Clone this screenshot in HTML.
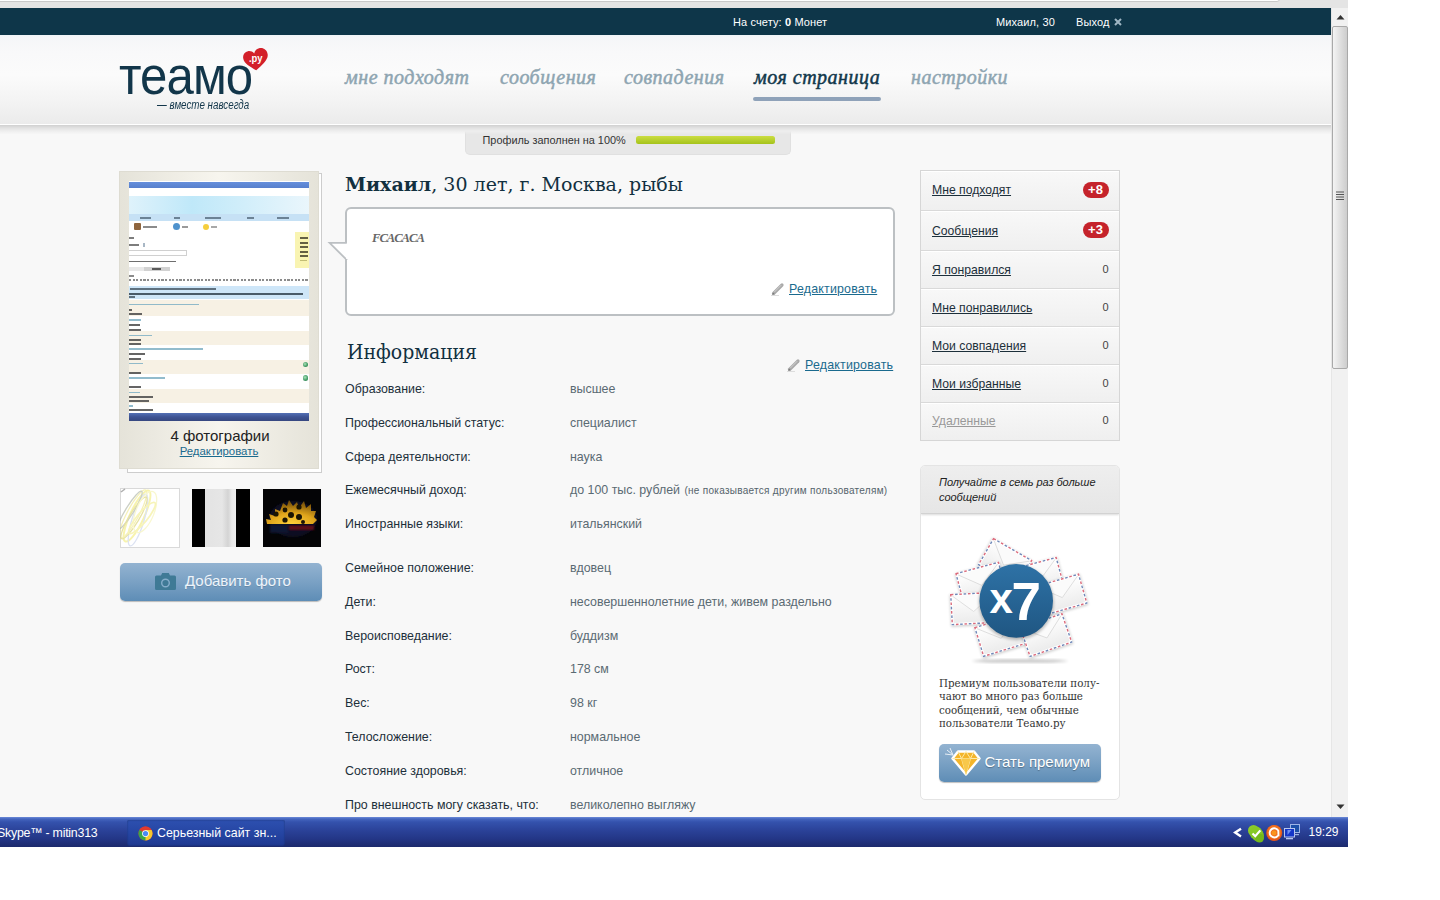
<!DOCTYPE html>
<html lang="ru">
<head>
<meta charset="utf-8">
<title>Теамо</title>
<style>
*{box-sizing:border-box;margin:0;padding:0}
html,body{width:1440px;height:900px;background:#fff;overflow:hidden}
body{font-family:"Liberation Sans","DejaVu Sans",sans-serif;font-size:12px;color:#1c2f3a;position:relative}
.abs{position:absolute}
#shot{position:absolute;left:0;top:0;width:1348px;height:847px;overflow:hidden;background:#f8f8f8}
#chrome{position:absolute;left:0;top:0;width:1348px;height:8px;background:#e4e4e4}
#chrome i{position:absolute;left:-4px;top:-6px;width:1284px;height:8px;background:#fff;border:1px solid #c9c9c9;border-radius:3px}
#page{position:absolute;left:0;top:8px;width:1331px;height:809px;background:#f8f8f8;overflow:hidden}
#topbar{position:absolute;left:0;top:0;width:1331px;height:27px;background:#0e3649;color:#fff;font-size:11px}
#topbar span{position:absolute;top:8px;letter-spacing:.12px;white-space:nowrap;line-height:13px}
#head{position:absolute;left:0;top:27px;width:1331px;height:88.5px;background:linear-gradient(#eef4f7 0,#f5f6f8 2px,#f9f9fa 20%,#fbfbfb 45%,#f4f4f4 72%,#ebebeb 100%);z-index:2}
#head:after{content:"";position:absolute;left:0;top:88.5px;width:1331px;height:10.5px;background:linear-gradient(#fff 0,#fff 1.5px,#d3d3d3 1.5px,#e2e2e2 4px,#eeeeee 7px,rgba(248,248,248,0) 10.5px);pointer-events:none}
.nav{position:absolute;top:31px;font-family:"Liberation Serif","DejaVu Serif",serif;font-style:italic;font-size:20px;line-height:22px;color:#8ea5b1;white-space:nowrap;letter-spacing:.5px;-webkit-text-stroke:.5px currentColor}
.nav.on{color:#12384b}
#navbar{position:absolute;left:753px;top:62px;width:128px;height:4px;border-radius:2px;background:#8fa2b9}
#prog{position:absolute;left:465px;top:118px;width:326px;height:28.5px;background:linear-gradient(#dedede 0,#e7e7e7 6px,#e7e7e7 100%);border:1px solid #e0e0e0;border-top:none;border-radius:0 0 5px 5px;font-size:10.9px;color:#333}
#prog span{position:absolute;left:16.5px;top:8px;white-space:nowrap}
#prog i{position:absolute;left:170px;top:9.5px;width:139px;height:8px;border-radius:2.5px;background:linear-gradient(#cbdd42,#a5c31b)}

#photo{position:absolute;left:119px;top:163px;width:200px;height:297.5px;background:linear-gradient(90deg,#e5e3d9 0%,#f7f5ee 50%,#e5e3d9 100%);border:1px solid #dedcd2}
#sheet{position:absolute;left:127px;top:165px;width:194.5px;height:299.5px;background:#fff;border:1px solid #cdcdcd}
#pimg{position:absolute;left:9px;top:9px;width:180px;height:240px;background:#fff;overflow:hidden}
#pimg i{position:absolute;display:block;opacity:.85}
#pcap{position:absolute;left:0;top:255px;width:200px;text-align:center;font-size:15px;line-height:17px;color:#222}
#pedit{position:absolute;left:0;top:273px;width:198px;text-align:center;font-size:11.4px;line-height:13px;color:#1a6a8e;text-decoration:underline}
.th{position:absolute;top:481px;width:59px;height:59px}
#addbtn{position:absolute;left:120px;top:555px;width:202px;height:38px;border-radius:5px;background:linear-gradient(#93b3d1 0%,#7aa1c4 50%,#5e8db6 100%);box-shadow:0 1px 1px rgba(0,0,0,.25);color:#eef4fa;font-size:15px}
#addbtn span{position:absolute;left:65px;top:9px;line-height:18px;white-space:nowrap;text-shadow:0 1px 0 rgba(0,0,0,.12)}

.serif{font-family:"Liberation Serif","DejaVu Serif",serif}
#ttl{position:absolute;left:345px;top:162px;font-family:"DejaVu Serif","Liberation Serif",serif;font-size:19px;line-height:28px;color:#12303f;white-space:nowrap}
#bub{position:absolute;left:345px;top:199px;width:550px;height:109px;background:#fff;border:2px solid #bcc0c3;border-radius:6px}
#bubarrow{position:absolute;left:326px;top:228px;width:22px;height:26px}
#quote{position:absolute;left:372px;top:223px;letter-spacing:-1px;font-size:12.6px;line-height:14px;font-weight:bold;font-style:italic;color:#666;white-space:nowrap}
.edit{position:absolute;letter-spacing:.2px;font-size:12.4px;line-height:14px;color:#1a6a8e;text-decoration:underline;white-space:nowrap}
.pen{position:absolute;width:14px;height:14px}
#info{position:absolute;left:347px;top:329.5px;font-family:"DejaVu Serif Condensed","DejaVu Serif",serif;font-stretch:condensed;font-size:21px;line-height:28px;color:#12303f;white-space:nowrap}
.lb{position:absolute;left:345px;font-size:12.4px;line-height:14px;color:#1c2f3a;white-space:nowrap}
.vl{position:absolute;left:570px;font-size:12.4px;line-height:14px;color:#5a6a73;white-space:nowrap}
.vl small{font-size:10px;color:#55636b;letter-spacing:.28px;margin-left:1px}

#menu{position:absolute;left:920px;top:162px;width:200px;height:271px;border:1px solid #d6d6d6;background:#f6f6f6}
.mi{position:absolute;left:0;width:198px;background:linear-gradient(#f8f8f8,#efefef);border-top:1px solid #fff}
.mi+.mi{box-shadow:0 -1px 0 #d9d9d9}
.mi a{position:absolute;left:11px;font-size:12.2px;line-height:14px;color:#1c2f3a;text-decoration:underline;white-space:nowrap}
.mi em{position:absolute;right:10.5px;font-style:normal;font-size:11px;line-height:13px;color:#444}
.mi b{position:absolute;right:10.5px;width:26px;height:16px;border-radius:8px;background:#c5232b;color:#fff;font-size:13px;line-height:16px;margin-top:-1px;text-align:center;letter-spacing:.2px}
#promo{position:absolute;left:920px;top:457px;width:199.5px;height:335px;background:#fff;border:1px solid #e4e4e4;border-radius:5px;overflow:hidden}
#promoh{position:absolute;left:0;top:0;width:198px;height:48px;background:linear-gradient(#eeeeee,#e6e6e6);border-bottom:1px solid #d2d2d2;box-shadow:0 1px 2px rgba(0,0,0,.15)}
#promoh span{position:absolute;left:18px;top:9px;width:175px;font-size:11px;letter-spacing:-.05px;line-height:15px;font-style:italic;color:#222;font-family:"Liberation Sans",sans-serif}
#promot{position:absolute;left:18px;top:210.5px;width:178px;font-family:"DejaVu Serif","Liberation Serif",serif;font-size:10.3px;line-height:13.5px;color:#333;white-space:nowrap}
#prem{position:absolute;left:18px;top:278px;width:162px;height:38px;border-radius:5px;background:linear-gradient(#93b3d1 0%,#7aa1c4 50%,#5e8db6 100%);box-shadow:0 1px 1px rgba(0,0,0,.25);color:#fff;font-size:15px}
#prem span{position:absolute;left:45.5px;top:9px;line-height:18px;white-space:nowrap;text-shadow:0 1px 1px rgba(0,0,0,.3)}

#logo{position:absolute;left:119px;top:10px;font-size:54px;line-height:60px;color:#12364a;white-space:nowrap;transform-origin:0 0;transform:scaleX(.91);letter-spacing:-1px}
#heart{position:absolute;left:241px;top:10.7px;width:30px;height:26px}
#tag{position:absolute;left:157px;top:62.5px;font-size:12px;line-height:14px;font-style:italic;color:#12364a;white-space:nowrap;transform-origin:0 0;transform:scaleX(.815)}
#sb{position:absolute;left:1331px;top:8px;width:17px;height:809px;background:#f1f1f1;border-left:1px solid #e6e6e6}
#sbt{position:absolute;left:0;top:18px;width:16px;height:343px;border:1px solid #a9a9a9;border-radius:2px;background:linear-gradient(90deg,#f4f4f4 0%,#e2e2e2 45%,#cdcdcd 100%)}
#task{position:absolute;left:0;top:817px;width:1348px;height:30px;background:linear-gradient(#6c8ad8 0,#4565be 2px,#3452ad 5px,#2a4197 14px,#233686 22px,#1c2a6c 30px);color:#fff;font-size:12.4px}
#task span{position:absolute;white-space:nowrap;line-height:15px}
#tbtn{position:absolute;left:127px;top:3px;width:158px;height:26px;background:linear-gradient(#2d50b0,#2443a0 60%,#1f3990);border-radius:2px;box-shadow:inset 0 0 2px rgba(0,0,0,.35)}
</style>
</head>
<body>
<div id="shot">
 <div id="page">
  <div id="topbar">
   <span style="left:733px">На счету: <b>0</b> Монет</span>
   <span style="left:996px">Михаил, 30</span>
   <span style="left:1076px">Выход <svg width="8" height="8" viewBox="0 0 8 8" style="margin-left:1px"><path d="M1 1L7 7M7 1L1 7" stroke="#9fb6c4" stroke-width="2"/></svg></span>
  </div>
  <div id="head">
   <div class="nav" style="left:345px">мне подходят</div>
   <div class="nav" style="left:500px">сообщения</div>
   <div class="nav" style="left:624px">совпадения</div>
   <div class="nav on" style="left:754px">моя страница</div>
   <div class="nav" style="left:911px">настройки</div>
   <div id="navbar"></div>
   <div id="logo">теамо</div>
   <svg id="heart" viewBox="0 0 30 26"><g transform="translate(.3 .2) rotate(-9 15 13)"><path d="M13.2 24 C8 19.5 2.2 15.5 2.2 10 C2.2 6.2 4.8 3.8 8 3.8 C10.5 3.8 12.6 5 13.8 7 C14.8 4.4 17.2 2.6 20.2 2.6 C24 2.6 27 5.6 27 9.8 C27 15.5 19.5 19.5 13.2 24Z" fill="#d3202a"/></g><text x="7.9" y="15.9" font-family="Liberation Sans, sans-serif" font-size="10.5" font-weight="bold" fill="#fff" textLength="13.5" lengthAdjust="spacingAndGlyphs">.ру</text></svg>
   <div id="tag">— вместе навсегда</div>

  </div>
  <div id="prog"><span>Профиль заполнен на 100%</span><i></i></div>
  
  <div id="sheet"></div>
  <div id="photo">
   <div id="pimg">
    <i style="left:0px;top:0.5px;width:180px;height:6.3px;background:linear-gradient(#4a7bd6,#3a69c4)"></i>
    <i style="left:0px;top:15px;width:180px;height:18px;background:linear-gradient(90deg,#d9f0fa 0%,#b4e4f8 35%,#c6eaf9 60%,#e6f4fb 100%)"></i>
    <i style="left:0px;top:33px;width:180px;height:7px;background:#bcdcf3"></i>
    <i style="left:11px;top:35.5px;width:11px;height:2px;background:#5b7184"></i>
    <i style="left:45px;top:35.5px;width:6px;height:2px;background:#5b7184"></i>
    <i style="left:76px;top:35.5px;width:16px;height:2px;background:#5b7184"></i>
    <i style="left:118px;top:35.5px;width:7px;height:2px;background:#5b7184"></i>
    <i style="left:148px;top:35.5px;width:12px;height:2px;background:#5b7184"></i>
    <i style="left:5px;top:42px;width:7px;height:7px;background:#7a4a1c;border-radius:1px"></i>
    <i style="left:14px;top:45px;width:14px;height:1.5px;background:#777"></i>
    <i style="left:43.5px;top:42px;width:7px;height:7px;background:#2f7fc4;border-radius:50%"></i>
    <i style="left:53px;top:45px;width:6px;height:1.5px;background:#888"></i>
    <i style="left:74px;top:42.5px;width:6px;height:6px;background:#f3c61c;border-radius:50%"></i>
    <i style="left:82px;top:45px;width:6px;height:1.5px;background:#999"></i>
    <i style="left:166px;top:51px;width:14px;height:36px;background:#f8f2a4"></i>
    <i style="left:171px;top:55.5px;width:8px;height:2px;background:#4a4530"></i>
    <i style="left:171px;top:60.5px;width:8px;height:2px;background:#4a4530"></i>
    <i style="left:171px;top:65px;width:8px;height:2px;background:#4a4530"></i>
    <i style="left:171px;top:69.5px;width:8px;height:2px;background:#4a4530"></i>
    <i style="left:171px;top:74px;width:8px;height:2px;background:#4a4530"></i>
    <i style="left:171px;top:78.5px;width:7px;height:1.5px;background:#b9b36a"></i>
    <i style="left:0px;top:56px;width:5px;height:1.5px;background:#666"></i>
    <i style="left:0px;top:63px;width:10px;height:1.5px;background:#666"></i>
    <i style="left:14px;top:61.5px;width:2px;height:4px;background:#9ab"></i>
    <i style="left:-1px;top:69px;width:59px;height:6px;border:1px solid #c8c8c8;background:#fff"></i>
    <i style="left:0px;top:79.5px;width:47px;height:1.8px;background:#555"></i>
    <i style="left:0px;top:86px;width:15px;height:4px;background:#e4e4e4"></i>
    <i style="left:15px;top:86px;width:26px;height:4px;background:#c9c9c9"></i>
    <i style="left:23px;top:87px;width:9px;height:2px;background:#444"></i>
    <i style="left:0px;top:94px;width:5px;height:1.5px;background:#777"></i>
    <i style="left:0px;top:97.5px;width:180px;height:2.2px;background:repeating-linear-gradient(90deg,#777 0 2.2px,#fff 2.2px 3.6px)"></i>
    <i style="left:0px;top:104.5px;width:180px;height:13.5px;background:#c6e2f7"></i>
    <i style="left:1px;top:106.8px;width:86px;height:1.8px;background:#4a5a68"></i>
    <i style="left:0px;top:112px;width:174px;height:1.8px;background:#33424f"></i>
    <i style="left:0px;top:115.3px;width:6px;height:1.5px;background:#4a5a68"></i>
    <i style="left:0px;top:119px;width:180px;height:15.7px;background:#f6efdf"></i>
    <i style="left:0px;top:150.2px;width:180px;height:14px;background:#f6efdf"></i>
    <i style="left:0px;top:179px;width:180px;height:14px;background:#f6efdf"></i>
    <i style="left:0px;top:207.8px;width:180px;height:14px;background:#f6efdf"></i>
    <i style="left:0px;top:122.5px;width:70px;height:1.6px;background:#7fb0c4"></i>
    <i style="left:0px;top:127.8px;width:3px;height:2px;background:#4a4a4a"></i>
    <i style="left:0px;top:132.3px;width:13px;height:2px;background:#4a4a4a"></i>
    <i style="left:0px;top:138.2px;width:12px;height:1.6px;background:#7fb0c4"></i>
    <i style="left:0px;top:143.3px;width:10.5px;height:2px;background:#4a4a4a"></i>
    <i style="left:0px;top:147.8px;width:11.5px;height:2px;background:#4a4a4a"></i>
    <i style="left:0px;top:153.7px;width:23px;height:1.6px;background:#7fb0c4"></i>
    <i style="left:0px;top:157.5px;width:11.5px;height:2px;background:#4a4a4a"></i>
    <i style="left:0px;top:161.5px;width:11.5px;height:2px;background:#4a4a4a"></i>
    <i style="left:0px;top:167.3px;width:74px;height:1.6px;background:#7fb0c4"></i>
    <i style="left:0px;top:172.3px;width:16px;height:2px;background:#4a4a4a"></i>
    <i style="left:0px;top:176.8px;width:11.5px;height:2px;background:#4a4a4a"></i>
    <i style="left:0px;top:181.8px;width:14px;height:1.6px;background:#7fb0c4"></i>
    <i style="left:0px;top:190.5px;width:11.5px;height:2px;background:#4a4a4a"></i>
    <i style="left:0px;top:196px;width:36px;height:1.6px;background:#7fb0c4"></i>
    <i style="left:0px;top:205.3px;width:11.5px;height:2px;background:#4a4a4a"></i>
    <i style="left:0px;top:210.5px;width:11px;height:1.6px;background:#7fb0c4"></i>
    <i style="left:0px;top:214.6px;width:24px;height:2px;background:#4a4a4a"></i>
    <i style="left:0px;top:218.8px;width:20px;height:2px;background:#4a4a4a"></i>
    <i style="left:0px;top:224.2px;width:4px;height:1.6px;background:#7fb0c4"></i>
    <i style="left:0px;top:228.3px;width:24px;height:2px;background:#4a4a4a"></i>
    <i style="left:173.5px;top:180.5px;width:5.5px;height:5.5px;background:radial-gradient(circle at 40% 40%,#9fe0b0,#1f8a4a 60%,#0f5a30);border-radius:50%"></i>
    <i style="left:173.5px;top:194px;width:5.5px;height:5.5px;background:radial-gradient(circle at 40% 40%,#9fe0b0,#1f8a4a 60%,#0f5a30);border-radius:50%"></i>
    <i style="left:0px;top:232px;width:180px;height:8px;background:linear-gradient(#3557a8,#1c3580 50%,#132769)"></i>
   </div>
   <div id="pcap">4 фотографии</div>
   <div id="pedit">Редактировать</div>
  </div>
  <svg class="th" style="left:120px;top:480px;width:60px;height:60px" viewBox="0 0 60 60"><defs><filter id="sb1"><feGaussianBlur stdDeviation=".5"/></filter></defs><rect x=".5" y=".5" width="59" height="59" fill="#fff" stroke="#d9d9d9"/>
   <g fill="none" stroke-width="1.3" opacity=".6" filter="url(#sb1)">
    <ellipse cx="13" cy="26" rx="6" ry="27" transform="rotate(28 13 26)" stroke="#eee68a"/>
    <ellipse cx="17" cy="28" rx="7" ry="28" transform="rotate(25 17 28)" stroke="#f2ec7a" stroke-width="2"/>
    <ellipse cx="18" cy="32" rx="6" ry="27" transform="rotate(17 18 32)" stroke="#c5d0ea"/>
    <ellipse cx="10" cy="22" rx="4" ry="22" transform="rotate(32 10 22)" stroke="#a9b0a0"/>
    <ellipse cx="14" cy="30" rx="5" ry="24" transform="rotate(31 14 30)" stroke="#d7cf6a"/>
    <ellipse cx="25" cy="24" rx="9" ry="22" transform="rotate(22 25 24)" stroke="#f5f2b0"/>
    <ellipse cx="22" cy="30" rx="5" ry="20" transform="rotate(40 22 30)" stroke="#f3ee8c" stroke-width="1.8"/>
    <path d="M1 4 L5 1" stroke="#777" stroke-width="1.5"/>
   </g></svg>
  <div class="th" style="left:192px;width:58px;height:58px;background:linear-gradient(90deg,#000 0 13.3px,#e3e3e3 13.3px,#e6e6e6 30px,#d4d4d4 36px,#e9e9e9 40px,#ededed 44.5px,#000 44.5px 100%)"></div>
  <svg class="th" style="left:263px;width:58px;height:58px" viewBox="0 0 58 58"><defs><radialGradient id="sun" cx="50%" cy="100%" r="90%"><stop offset="0" stop-color="#ffd23a"/><stop offset=".5" stop-color="#e0a51c"/><stop offset="1" stop-color="#7a5208"/></radialGradient><filter id="bl"><feGaussianBlur stdDeviation="1.2"/></filter><filter id="bl2"><feGaussianBlur stdDeviation=".6"/></filter></defs>
   <rect width="58" height="58" fill="#040406"/>
   <ellipse cx="30" cy="30" rx="24" ry="18" fill="#0c1020" filter="url(#bl)"/>
   <g filter="url(#bl2)"><path d="M4 35 L3 30 L8 31 L6 25 L12 27 L12 20 L17 22 L20 14 L24 17 L26 11 L30 17 L34 13 L36 19 L41 12 L43 19 L48 15 L48 22 L53 22 L51 28 L54 31 L50 35Z" fill="url(#sun)"/>
   <g fill="#1c1206"><circle cx="13" cy="25" r="2.6"/><circle cx="22" cy="21" r="2.4"/><circle cx="28" cy="26" r="3"/><circle cx="36" cy="18" r="2.6"/><circle cx="36" cy="28" r="3"/><circle cx="22" cy="31" r="2.6"/><circle cx="40" cy="33" r="2"/></g></g>
   <rect x="7" y="36" width="18" height="8" fill="#0c1430" filter="url(#bl)"/><rect x="26" y="36.5" width="25" height="4.5" fill="#5e0c18" filter="url(#bl)"/>
  </svg>
  <div id="addbtn"><svg class="abs" style="left:34px;top:8px" width="23" height="21" viewBox="0 0 23 21"><path d="M2.5 4.5 h4.5 l1.2-2.6 h6.6 l1.2 2.6 h4.5 a1.5 1.5 0 0 1 1.5 1.5 v11.5 a1.5 1.5 0 0 1 -1.5 1.5 h-18 a1.5 1.5 0 0 1 -1.5 -1.5 v-11.5 a1.5 1.5 0 0 1 1.5 -1.5z" fill="#3f7a96"/><circle cx="11.5" cy="12" r="3.8" fill="none" stroke="#86aecb" stroke-width="1.4"/></svg><span>Добавить фото</span></div>
  <!--LEFT-->
  
  <div id="ttl" class="serif"><b>Михаил</b>, 30 лет, г. Москва, рыбы</div>
  <div id="bub"></div>
  <svg id="bubarrow" viewBox="0 0 22 26"><path d="M21 6.8 L3.6 6.8 L21 24.2" fill="#fff" stroke="#bcc0c3" stroke-width="1.8" stroke-linejoin="miter"/><rect x="20" y="7.8" width="2" height="15" fill="#fff"/></svg>
  <div id="quote" class="serif">FCACACA</div>
  <svg class="pen" style="left:771px;top:274px" viewBox="0 0 14 14"><path d="M2.5 11.5 L11 3" stroke="#a9a9a9" stroke-width="3.2" stroke-linecap="round"/><path d="M3.2 10.2 L10.2 3.2" stroke="#d2d2d2" stroke-width="1"/><path d="M1.2 12.8 L2 10.4 L3.6 12Z" fill="#777"/><path d="M0 13.5h8" stroke="#ddd" stroke-width="1"/></svg>
  <div class="edit" style="left:789px;top:274px">Редактировать</div>
  <div id="info" class="serif">Информация</div>
  <svg class="pen" style="left:787px;top:350px" viewBox="0 0 14 14"><path d="M2.5 11.5 L11 3" stroke="#a9a9a9" stroke-width="3.2" stroke-linecap="round"/><path d="M3.2 10.2 L10.2 3.2" stroke="#d2d2d2" stroke-width="1"/><path d="M1.2 12.8 L2 10.4 L3.6 12Z" fill="#777"/><path d="M0 13.5h8" stroke="#ddd" stroke-width="1"/></svg>
  <div class="edit" style="left:805px;top:350px">Редактировать</div>
  <div class="lb" style="top:374px">Образование:</div><div class="vl" style="top:374px">высшее</div>
  <div class="lb" style="top:407.5px">Профессиональный статус:</div><div class="vl" style="top:407.5px">специалист</div>
  <div class="lb" style="top:441.5px">Сфера деятельности:</div><div class="vl" style="top:441.5px">наука</div>
  <div class="lb" style="top:475px">Ежемесячный доход:</div><div class="vl" style="top:475px">до 100 тыс. рублей <small>(не показывается другим пользователям)</small></div>
  <div class="lb" style="top:509px">Иностранные языки:</div><div class="vl" style="top:509px">итальянский</div>
  <div class="lb" style="top:553px">Семейное положение:</div><div class="vl" style="top:553px">вдовец</div>
  <div class="lb" style="top:587px">Дети:</div><div class="vl" style="top:587px">несовершеннолетние дети, живем раздельно</div>
  <div class="lb" style="top:621px">Вероисповедание:</div><div class="vl" style="top:621px">буддизм</div>
  <div class="lb" style="top:654px">Рост:</div><div class="vl" style="top:654px">178 см</div>
  <div class="lb" style="top:688px">Вес:</div><div class="vl" style="top:688px">98 кг</div>
  <div class="lb" style="top:722px">Телосложение:</div><div class="vl" style="top:722px">нормальное</div>
  <div class="lb" style="top:756px">Состояние здоровья:</div><div class="vl" style="top:756px">отличное</div>
  <div class="lb" style="top:790px">Про внешность могу сказать, что:</div><div class="vl" style="top:790px">великолепно выгляжу</div>
  <!--MID-->
    <div id="menu">
   <div class="mi" style="top:0px;height:40px"><a style="top:11px">Мне подходят</a><b style="top:11px">+8</b></div>
   <div class="mi" style="top:40px;height:40px"><a style="top:12px">Сообщения</a><b style="top:11px">+3</b></div>
   <div class="mi" style="top:80px;height:38px"><a style="top:11px">Я понравился</a><em style="top:11px">0</em></div>
   <div class="mi" style="top:118px;height:38px"><a style="top:11px">Мне понравились</a><em style="top:11px">0</em></div>
   <div class="mi" style="top:156px;height:38px"><a style="top:11px">Мои совпадения</a><em style="top:11px">0</em></div>
   <div class="mi" style="top:194px;height:38px"><a style="top:11px">Мои избранные</a><em style="top:11px">0</em></div>
   <div class="mi" style="top:232px;height:37px"><a style="top:10px;color:#999">Удаленные</a><em style="top:10px">0</em></div>
  </div>
  <div id="promo">
   <div id="promoh"><span>Получайте в семь раз больше сообщений</span></div>
   <svg class="abs" style="left:0;top:50px" width="198" height="160" viewBox="0 50 198 160">
    <defs>
     <linearGradient id="eg" x1="0" y1="0" x2="0" y2="1"><stop offset="0" stop-color="#fff"/><stop offset="1" stop-color="#ececec"/></linearGradient>
     <linearGradient id="cg" x1="0" y1="0" x2="0" y2="1"><stop offset="0" stop-color="#2e72a6"/><stop offset="1" stop-color="#1f5682"/></linearGradient>
     <filter id="es" x="-20%" y="-20%" width="140%" height="140%"><feGaussianBlur stdDeviation="1.6"/></filter>
     <g id="env">
      <rect x="-23" y="-15" width="46" height="32" fill="#000" opacity=".22" filter="url(#es)"/>
      <rect x="-23" y="-16" width="46" height="32" fill="#fff"/>
      <rect x="-22" y="-15" width="44" height="30" fill="none" stroke="#dc6a7b" stroke-width="1.4" stroke-dasharray="2.6 6"/>
      <rect x="-22" y="-15" width="44" height="30" fill="none" stroke="#6f88b8" stroke-width="1.4" stroke-dasharray="2.6 6" stroke-dashoffset="4.3"/>
      <rect x="-20.5" y="-13.5" width="41" height="27" fill="url(#eg)"/>
      <path d="M-20.5 -13.5 L0 3 L20.5 -13.5" fill="#fbfbfb" stroke="#d9d9d9" stroke-width=".8"/>
     </g>
    </defs>
    <ellipse cx="99" cy="195" rx="48" ry="1.6" fill="#000" opacity=".25" filter="url(#es)"/>
    <use href="#env" transform="translate(84.1 96.6) rotate(30)"/>
    <use href="#env" transform="translate(117.8 111.7) rotate(-15)"/>
    <use href="#env" transform="translate(60.1 116.5) rotate(-15)"/>
    <use href="#env" transform="translate(52.5 142.5) rotate(-3)"/>
    <use href="#env" transform="translate(140.5 128.7) rotate(-16)"/>
    <use href="#env" transform="translate(79.3 169.5) rotate(-17)"/>
    <use href="#env" transform="translate(125.0 169.1) rotate(-19)"/>
    <circle cx="95.2" cy="136.4" r="37.5" fill="#000" opacity=".25" filter="url(#es)"/>
    <circle cx="95.2" cy="134.9" r="36.8" fill="url(#cg)"/>
    <text x="68.5" y="147" font-family="Liberation Sans, sans-serif" font-weight="bold" font-size="42" fill="#fff">x</text>
    <text x="90.5" y="154.4" font-family="Liberation Sans, sans-serif" font-weight="bold" font-size="53" fill="#fff">7</text>
   </svg>
   <div id="promot" class="serif">Премиум пользователи полу-<br>чают во много раз больше<br>сообщений, чем обычные<br>пользователи Теамо.ру</div>
   <div id="prem"><svg class="abs" style="left:6px;top:4px" width="38" height="30" viewBox="0 0 38 30"><path d="M2 2 L8 7 M5 0 L8 7 M0 6 L8 7" stroke="#fff" stroke-width="1" opacity=".8"/><path d="M13 3.5 H29 L34.5 10.5 L21 26.5 L7.5 10.5Z" fill="#f4b52a" stroke="#fff" stroke-width="2.4" stroke-linejoin="round"/><path d="M7.5 10.5H34.5M13 3.5L16.5 10.5L21 3.5L25.5 10.5L29 3.5M16.5 10.5L21 26.5L25.5 10.5" fill="none" stroke="#fde9a8" stroke-width="1"/><path d="M16.5 10.5H25.5L21 26.5Z" fill="#f8c84a"/></svg><span>Стать премиум</span></div>
  </div>
  <!--RIGHT-->
 </div>
 <div id="chrome"><i></i></div>
 
 <div id="sb">
  <svg class="abs" style="left:4px;top:6px" width="9" height="6" viewBox="0 0 9 6"><path d="M0.5 5.5 L4.5 1 L8.5 5.5Z" fill="#333"/></svg>
  <div id="sbt"><svg class="abs" style="left:3px;top:164px" width="8" height="9" viewBox="0 0 8 9"><path d="M0 1h8M0 3.5h8M0 6h8M0 8.5h8" stroke="#555" stroke-width="1"/></svg></div>
  <svg class="abs" style="left:4px;top:796px" width="9" height="6" viewBox="0 0 9 6"><path d="M0.5 0.5 L4.5 5 L8.5 0.5Z" fill="#333"/></svg>
 </div>

 
 <div id="task">
  <span style="left:-3px;top:9px;letter-spacing:-.25px">Skype™ - mitin313</span>
  <div id="tbtn"></div>
  <svg class="abs" style="left:137.5px;top:8.5px" width="15" height="15" viewBox="0 0 16 16"><circle cx="8" cy="8" r="7.5" fill="#e23a2e"/><path d="M8 8 L1.5 4.3 A7.5 7.5 0 0 0 8 15.5 L11.5 10Z" fill="#3aa648"/><path d="M8 8 L8 15.5 A7.5 7.5 0 0 0 14.5 4.3 L8 4.3Z" fill="#f7c92d"/><path d="M8 0.5 A7.5 7.5 0 0 1 14.5 4.3 L8 4.3 L1.5 4.3 A7.5 7.5 0 0 1 8 0.5Z" fill="#e23a2e"/><circle cx="8" cy="8" r="3.6" fill="#fff"/><circle cx="8" cy="8" r="2.8" fill="#4a8af4"/></svg>
  <span style="left:157px;top:9px">Серьезный сайт зн...</span>
  <svg class="abs" style="left:1232px;top:6px" width="70" height="20" viewBox="0 0 70 20">
   <path d="M9 5.8 L3.2 9.6 L9 13.4" fill="none" stroke="#fff" stroke-width="2.4"/>
   <g><circle cx="21.5" cy="7.5" r="5.5" fill="#8acb2a"/><circle cx="26" cy="12.5" r="6" fill="#7cc01e"/><circle cx="24" cy="10" r="6.5" fill="#86c926"/><circle cx="27.5" cy="15" r="4.5" fill="#74b81a"/><path d="M20.5 10.5 L23.3 13.2 L28.3 7.4" fill="none" stroke="#fff" stroke-width="2.2"/></g>
   <g><circle cx="42.2" cy="10" r="8" fill="#e4561c"/><circle cx="42.2" cy="9.2" r="7" fill="#f0701f"/><path d="M45.8 12.8 A4.6 4.6 0 1 1 46.3 7.6 L46.5 13.2" fill="none" stroke="#fff" stroke-width="1.9"/><circle cx="42" cy="10" r="2.4" fill="#f9951e"/></g>
   <g><rect x="58.5" y="1.5" width="9" height="8" fill="#1c4fa8" stroke="#9db4e6" stroke-width="1"/><rect x="52.5" y="5.5" width="10" height="8.5" fill="#1436c8" stroke="#b8c6ee" stroke-width="1"/><path d="M55.5 7 l4 0 l-4 5z" fill="#6f8ff0"/><rect x="54" y="15" width="7" height="1.3" fill="#b8c6ee"/><rect x="62" y="11" width="5" height="1.2" fill="#9db4e6"/></g>
  </svg>
  <span style="left:1308.5px;top:8px;font-size:12px">19:29</span>
 </div>

</div>
</body>
</html>
